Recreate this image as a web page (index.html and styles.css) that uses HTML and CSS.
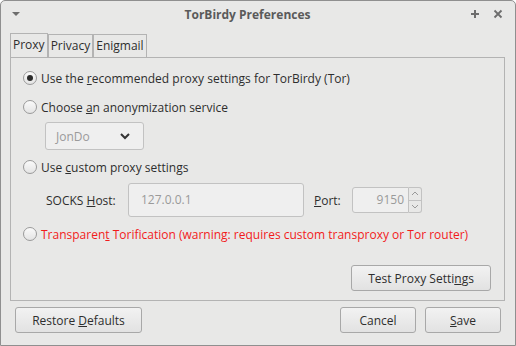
FILE: index.html
```html
<!DOCTYPE html>
<html lang="en">
<head>
  <meta charset="UTF-8">
  <title>TorBirdy Preferences</title>
  <link rel="stylesheet" href="styles.css">
</head>
<body>
  <div class="window">
    <!-- Barra del titolo -->
    <div class="titlebar">
      <span class="menu-arrow"></span>
      <span class="title">TorBirdy Preferences</span>
      <span class="wm-buttons">
        <svg width="10" height="10" viewBox="0 0 10 10"><path d="M5 1v8M1 5h8" stroke="#6d6d6d" stroke-width="2"/></svg>
        <svg width="10" height="10" viewBox="0 0 10 10"><path d="M1.5 1.5l7 7M8.5 1.5l-7 7" stroke="#6d6d6d" stroke-width="1.8"/></svg>
      </span>
    </div>

    <div class="content">
      <!-- Schede -->
      <div class="tabs">
        <div class="tab selected">Proxy</div>
        <div class="tab">Privacy</div>
        <div class="tab">Enigmail</div>
      </div>

      <div class="panel">
        <label class="radio-row"><span class="radio checked"></span><span>Use the <u>r</u>ecommended proxy settings for TorBirdy (Tor)</span></label>
        <label class="radio-row"><span class="radio"></span><span>Choose <u>a</u>n anonymization service</span></label>
        <div class="indent">
          <div class="dropdown">
            <span>JonDo</span>
            <svg width="12" height="8" viewBox="0 0 12 8"><path d="M2 2l4 4 4-4" fill="none" stroke="#333" stroke-width="2"/></svg>
          </div>
        </div>
        <label class="radio-row"><span class="radio"></span><span>Use <u>c</u>ustom proxy settings</span></label>
        <div class="socks-row">
          <span class="field-label">SOCKS <u>H</u>ost:</span>
          <div class="input host">127.0.0.1</div>
          <span class="field-label port-label"><u>P</u>ort:</span>
          <div class="input port">9150</div>
          <div class="spinner">
            <span><svg width="8" height="5" viewBox="0 0 8 5"><path d="M1 4l3-3 3 3" fill="none" stroke="#999" stroke-width="1"/></svg></span>
            <span><svg width="8" height="5" viewBox="0 0 8 5"><path d="M1 1l3 3 3-3" fill="none" stroke="#999" stroke-width="1"/></svg></span>
          </div>
        </div>
        <label class="radio-row warning"><span class="radio"></span><span>Transparen<u>t</u> Torification (warning: requires custom transproxy or Tor router)</span></label>
        <div class="panel-actions">
          <button>Test Proxy Setti<u>n</u>gs</button>
        </div>
      </div>

      <div class="dialog-buttons">
        <button class="restore">Restore <u>D</u>efaults</button>
        <div class="right-buttons">
          <button class="cancel">Cancel</button>
          <button class="save"><u>S</u>ave</button>
        </div>
      </div>
    </div>
  </div>
</body>
</html>
```
FILE: styles.css
```css
/* Stile generale */
body {
  margin: 0;
  font-family: "Open Sans", "Noto Sans", sans-serif;
  font-size: 12px;
  color: #2e2e2e;
  background: #ffffff;
}

.window {
  width: 516px;
  height: 346px;
  box-sizing: border-box;
  border: 1px solid #8f8f8f;
  border-radius: 5px 5px 0 0;
  background: #e8e8e7;
  display: flex;
  flex-direction: column;
}

/* Barra del titolo */
.titlebar {
  height: 26px;
  display: flex;
  align-items: center;
  padding: 0 10px;
}

.menu-arrow {
  width: 0;
  height: 0;
  border-left: 4px solid transparent;
  border-right: 4px solid transparent;
  border-top: 4px solid #6d6d6d;
  margin-left: 1px;
}

.title {
  flex: 1;
  text-align: center;
  font-weight: bold;
  color: #5a5a5a;
  font-size: 12px;
  padding-left: 5px;
}

.wm-buttons {
  display: flex;
  gap: 13px;
  margin-right: 2px;
}

.content {
  flex: 1;
  padding: 6px 9px 0 9px;
  display: flex;
  flex-direction: column;
}

/* Schede */
.tabs {
  display: flex;
  align-items: flex-end;
  height: 24px;
}

.tab {
  border: 1px solid #b3b3b3;
  border-bottom: none;
  padding: 0 2px;
  height: 22px;
  line-height: 22px;
}

.tab.selected {
  height: 23px;
}

.panel {
  border: 1px solid #b3b3b3;
  height: 244px;
  box-sizing: border-box;
  padding: 9px 0 0 12px;
  display: flex;
  flex-direction: column;
  margin-right: 1px;
}

.radio-row {
  display: flex;
  align-items: center;
  height: 22px;
  margin-bottom: 7px;
  white-space: nowrap;
}

.radio {
  width: 14px;
  height: 14px;
  box-sizing: border-box;
  border: 1px solid #9a9a9a;
  border-radius: 50%;
  background: linear-gradient(#fafafa, #e4e4e4);
  margin-right: 4px;
  position: relative;
  flex-shrink: 0;
}

.radio.checked::after {
  content: "";
  position: absolute;
  left: 3px;
  top: 3px;
  width: 6px;
  height: 6px;
  border-radius: 50%;
  background: #2b2b2b;
}

.indent {
  padding-left: 22px;
  margin-top: -3px;
  margin-bottom: 6px;
}

.dropdown {
  width: 99px;
  height: 28px;
  box-sizing: border-box;
  border: 1px solid #c2c2c2;
  border-radius: 3px;
  background: #efefef;
  display: flex;
  align-items: center;
  justify-content: space-between;
  padding: 0 12px 0 10px;
  color: #9a9a9a;
}

.socks-row {
  display: flex;
  align-items: center;
  padding-left: 23px;
  margin-top: -2px;
  margin-bottom: 2px;
}

.field-label {
  width: 82px;
}

.port-label {
  width: 38px;
}

.input {
  box-sizing: border-box;
  border: 1px solid #c2c2c2;
  border-radius: 3px;
  background: #efefef;
  color: #9a9a9a;
}

.host {
  width: 176px;
  height: 34px;
  line-height: 32px;
  padding-left: 12px;
  margin-right: 10px;
}

.port {
  width: 57px;
  height: 26px;
  line-height: 24px;
  text-align: right;
  padding-right: 4px;
  border-radius: 3px 0 0 3px;
}

.spinner {
  display: flex;
  flex-direction: column;
  border: 1px solid #c2c2c2;
  border-left: none;
  border-radius: 0 3px 3px 0;
  height: 26px;
  box-sizing: border-box;
  width: 13px;
}

.spinner span {
  flex: 1;
  display: flex;
  align-items: center;
  justify-content: center;
}

.spinner span + span {
  border-top: 1px solid #c2c2c2;
}

.warning {
  color: #f21b1b;
  margin-top: 4px;
}

.panel-actions {
  margin-top: auto;
  display: flex;
  justify-content: flex-end;
  padding: 0 13px 9px 0;
}

/* Stile pulsante */
button {
  font-family: inherit;
  font-size: 12px;
  color: #2e2e2e;
  height: 26px;
  border: 1px solid #a8a8a8;
  border-radius: 3px;
  background: linear-gradient(#f2f2f2, #e2e2e2);
  padding: 0 8px;
  white-space: nowrap;
}

.panel-actions button {
  width: 140px;
}

.dialog-buttons {
  display: flex;
  justify-content: space-between;
  padding: 6px 5px 0 5px;
}

.restore {
  width: 127px;
}

.right-buttons {
  display: flex;
  gap: 9px;
}

.cancel,
.save {
  width: 76px;
}
```
